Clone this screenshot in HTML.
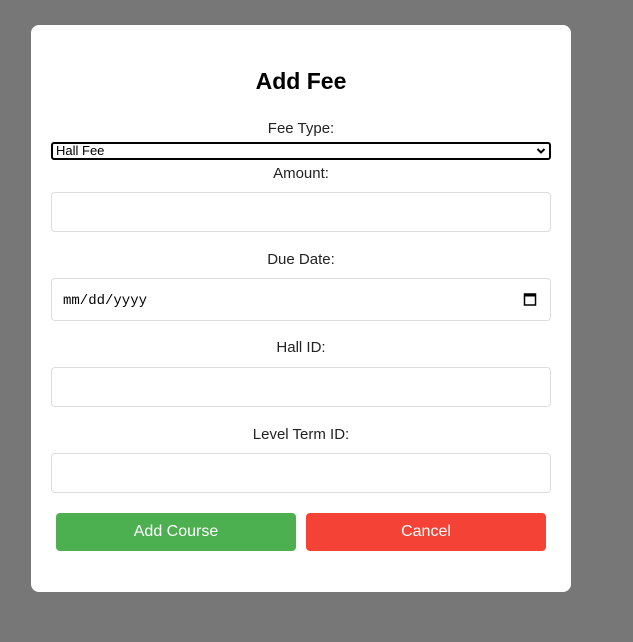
<!DOCTYPE html>
<html><head><meta charset="utf-8"><style>
*{box-sizing:border-box;margin:0;padding:0}
body{width:633px;height:642px;background:#777778;position:relative;overflow:hidden;font-family:"Liberation Sans",Arial,sans-serif;}
.modal{position:absolute;left:31px;top:25px;width:540px;height:567px;background:#fff;border-radius:8px;}
.abs{position:absolute}
h2{position:absolute;left:0;width:540px;top:43px;text-align:center;font-size:23px;font-weight:bold;color:#000}
.lbl{position:absolute;left:0;width:540px;text-align:center;font-size:15px;color:#222}
.inp{position:absolute;left:20px;width:500px;border:1px solid #ddd;border-radius:4px;background:#fff}
.sel{position:absolute;left:20px;top:117px;width:500px;height:18px;border:2px solid #000;border-radius:3px;font-size:13px;line-height:14px;padding-left:3px;color:#000}
.btn{position:absolute;top:488px;height:38px;width:240px;border-radius:4px;color:#fff;font-size:16px;text-align:center;line-height:38px;font-weight:normal}
</style></head><body>
<div class="modal">
<h2>Add Fee</h2>
<div class="lbl" style="top:95px">Fee Type:</div>
<div class="sel">Hall Fee
<svg class="abs" style="right:3px;top:3px" width="10" height="8" viewBox="0 0 10 8"><path d="M1.5 2 L5 5.5 L8.5 2" stroke="#000" stroke-width="2" fill="none"/></svg></div>
<div class="lbl" style="top:140px">Amount:</div>
<div class="inp" style="top:167px;height:40px"></div>
<div class="lbl" style="top:226px">Due Date:</div>
<div class="inp" style="top:253px;height:43px">
<span class="abs" style="left:11px;top:14px;font-family:'Liberation Mono',monospace;font-size:14px;color:#000">mm/dd/yyyy</span>
<svg class="abs" style="left:471px;top:13px" width="14" height="15" viewBox="0 0 14 15"><rect x="1.5" y="2" width="11" height="11" fill="none" stroke="#000" stroke-width="1.5"/><rect x="1.5" y="2" width="11" height="2.5" fill="#000"/></svg>
</div>
<div class="lbl" style="top:314px">Hall ID:</div>
<div class="inp" style="top:342px;height:40px"></div>
<div class="lbl" style="top:401px">Level Term ID:</div>
<div class="inp" style="top:428px;height:40px"></div>
<div class="btn" style="left:25px;background:#4caf50">Add Course</div>
<div class="btn" style="left:275px;background:#f44336">Cancel</div>
</div>
</body></html>
